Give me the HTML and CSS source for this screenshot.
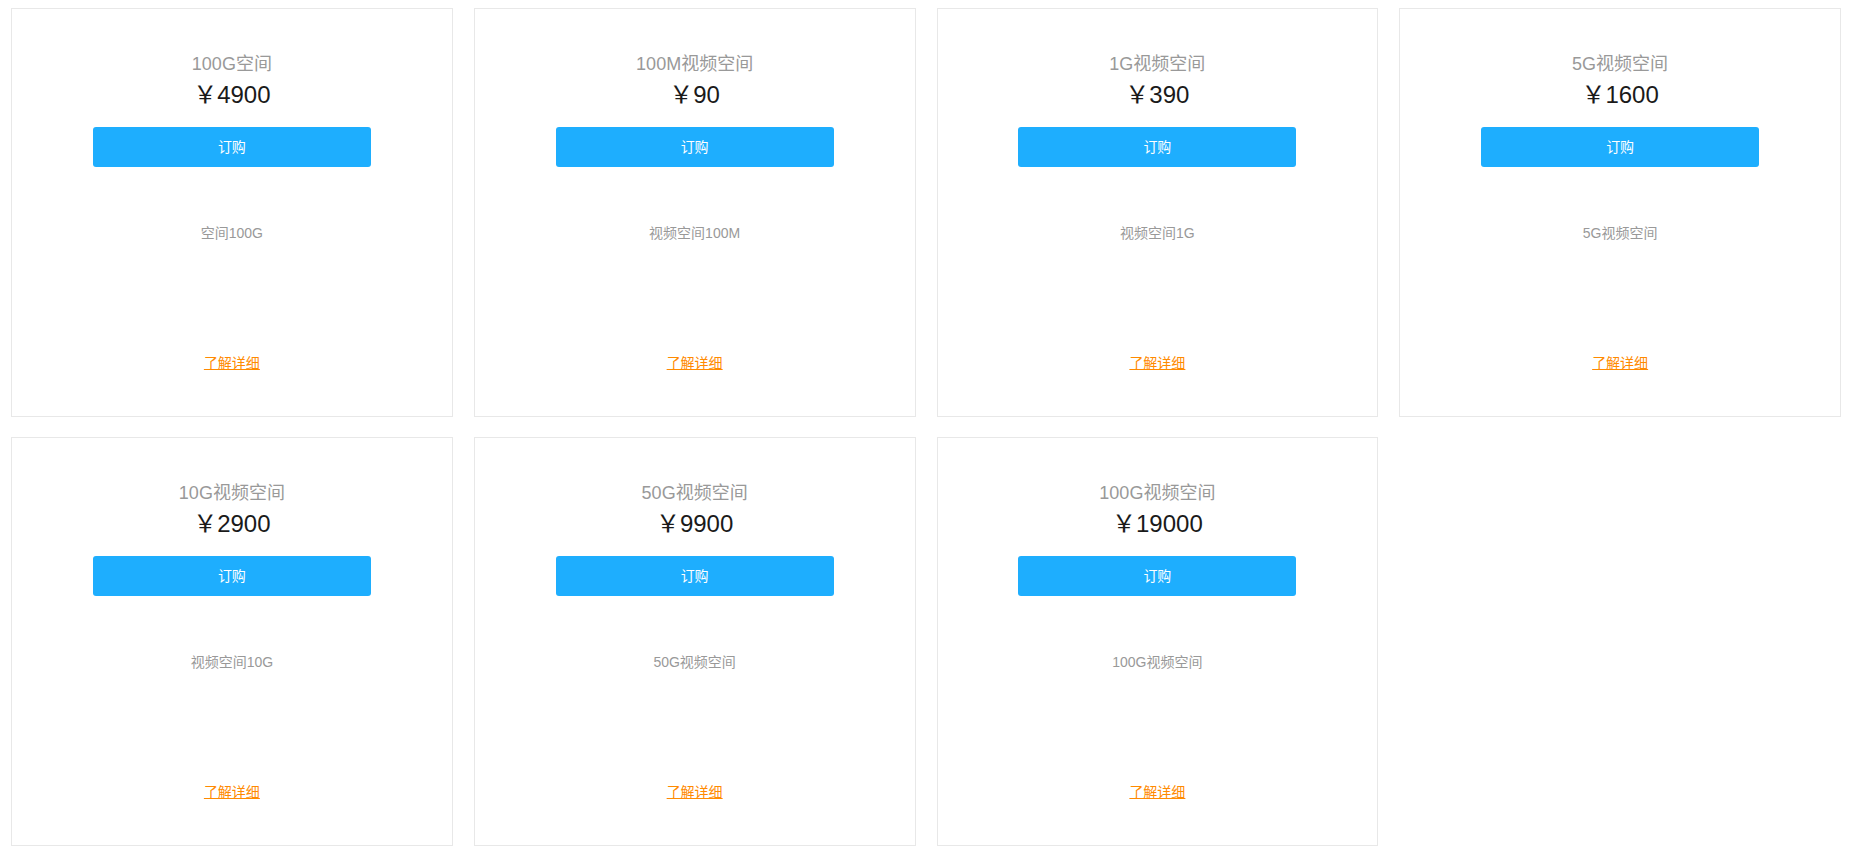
FILE: index.html
```html
<!DOCTYPE html>
<html lang="zh-CN">
<head>
<meta charset="utf-8">
<title>空间套餐</title>
<link rel="stylesheet" href="styles.css">
</head>
<body>
<div class="grid">
  <div class="card">
    <div class="title">100G空间</div>
    <div class="price">￥4900</div>
    <a class="btn">订购</a>
    <div class="desc">空间100G</div>
    <a class="more">了解详细</a>
  </div>
  <div class="card">
    <div class="title">100M视频空间</div>
    <div class="price">￥90</div>
    <a class="btn">订购</a>
    <div class="desc">视频空间100M</div>
    <a class="more">了解详细</a>
  </div>
  <div class="card">
    <div class="title">1G视频空间</div>
    <div class="price">￥390</div>
    <a class="btn">订购</a>
    <div class="desc">视频空间1G</div>
    <a class="more">了解详细</a>
  </div>
  <div class="card">
    <div class="title">5G视频空间</div>
    <div class="price">￥1600</div>
    <a class="btn">订购</a>
    <div class="desc">5G视频空间</div>
    <a class="more">了解详细</a>
  </div>
  <div class="card">
    <div class="title">10G视频空间</div>
    <div class="price">￥2900</div>
    <a class="btn">订购</a>
    <div class="desc">视频空间10G</div>
    <a class="more">了解详细</a>
  </div>
  <div class="card">
    <div class="title">50G视频空间</div>
    <div class="price">￥9900</div>
    <a class="btn">订购</a>
    <div class="desc">50G视频空间</div>
    <a class="more">了解详细</a>
  </div>
  <div class="card">
    <div class="title">100G视频空间</div>
    <div class="price">￥19000</div>
    <a class="btn">订购</a>
    <div class="desc">100G视频空间</div>
    <a class="more">了解详细</a>
  </div>
</div>
</body>
</html>
```

FILE: styles.css
```css
html, body {
  margin: 0;
  padding: 0;
  background: #fff;
}
body {
  font-family: "Liberation Sans", "Noto Sans CJK SC", sans-serif;
}
.grid {
  display: grid;
  grid-template-columns: repeat(4, 1fr);
  column-gap: 21px;
  row-gap: 20px;
  width: 1830px;
  padding: 8px 0 0 11px;
}
.card {
  border: 1px solid #e8e8e8;
  display: flex;
  flex-direction: column;
  align-items: center;
  padding: 43px 0 43px;
  height: 409px;
  box-sizing: border-box;
  text-align: center;
}
.title {
  font-size: 18px;
  line-height: 24px;
  color: #999;
}
.price {
  font-size: 24px;
  line-height: 32px;
  color: #1a1a1a;
  margin-top: 3px;
}
.btn {
  display: block;
  width: 278px;
  height: 40px;
  line-height: 40px;
  margin-top: 16px;
  background: #1eaefe;
  border-radius: 3px;
  color: #fff;
  font-size: 14px;
}
.desc {
  margin-top: 56px;
  height: 130px;
  font-size: 14px;
  line-height: 20px;
  color: #999;
}
.more {
  font-size: 14px;
  line-height: 20px;
  color: #ff8a00;
  text-decoration: underline;
}
```
